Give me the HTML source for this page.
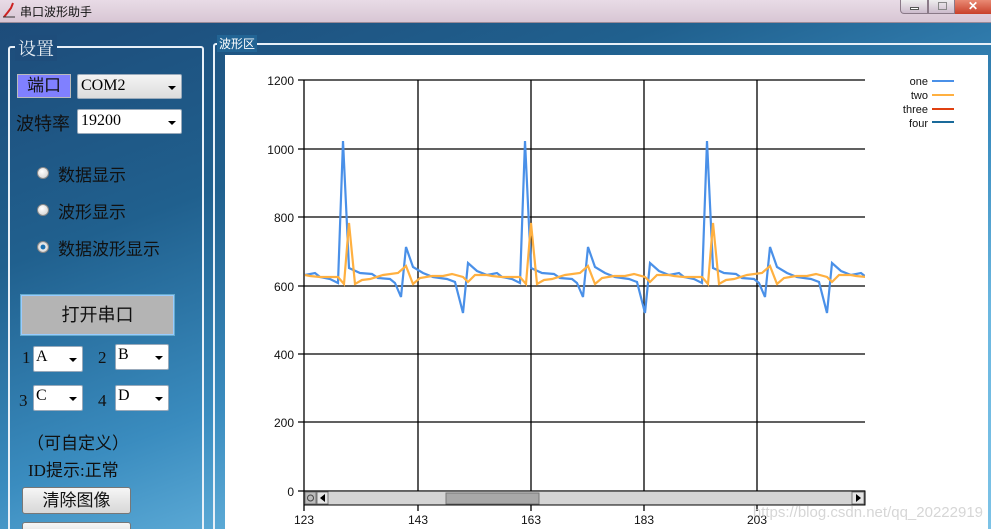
<!DOCTYPE html>
<html><head><meta charset="utf-8">
<style>
*{margin:0;padding:0;box-sizing:border-box}
html{width:991px;height:529px;overflow:hidden}
body{width:991px;height:529px;overflow:hidden;position:relative;font-family:"Liberation Sans","Noto Sans CJK SC",sans-serif;background:linear-gradient(160deg,#1d4a78 0%,#20608e 30%,#3a8cbf 55%,#6bb7e0 75%,#7cc2e6 100%)}
.tb{position:absolute;left:0;top:0;width:991px;height:23px;background:linear-gradient(#e8dbe6,#d8c6d4);border-bottom:1px solid #9a8a98}
.abs{position:absolute}
.cjk{font-family:"Liberation Serif","Noto Serif CJK SC","Noto Sans CJK SC",serif}
.sel{position:absolute;background:#fff;border:1px solid #9ab;border-radius:2px;font-family:"Liberation Serif","Noto Serif CJK SC",serif;color:#000}
.sel:after{content:"";position:absolute;right:5px;top:50%;margin-top:-1px;border-left:4px solid transparent;border-right:4px solid transparent;border-top:4px solid #000}
.lbl{position:absolute;color:#111;font-size:17px}
.radio{position:absolute;width:12px;height:12px;border-radius:50%;background:radial-gradient(circle at 40% 35%,#fff,#ccc);border:1px solid #888}
.btn{position:absolute;border:1px solid #777;border-radius:3px;background:linear-gradient(#f6f6f6,#e6e6e6 50%,#d8d8d8);font-size:17px;text-align:center;color:#111}
</style></head><body>
<div class="tb">
 <svg class="abs" style="left:2px;top:2px" width="14" height="16"><path d="M2 15 L6 10 L9 6 L11 1" stroke="#c22" stroke-width="2" fill="none"/><path d="M1 15 H13" stroke="#333"/></svg>
 <div class="abs" style="left:20px;top:3px;font-size:12px;color:#111">串口波形助手</div>
 <div class="abs" style="left:900px;top:0;width:28px;height:14px;border:1px solid #8a7a88;border-top:none;border-radius:0 0 0 4px;background:linear-gradient(#eee,#cbc)"><div style="position:absolute;left:9px;top:7px;width:9px;height:3px;border:1px solid #555;background:#fff"></div></div>
 <div class="abs" style="left:928px;top:0;width:27px;height:14px;border:1px solid #8a7a88;border-top:none;background:linear-gradient(#eee,#cbc)"><div style="position:absolute;left:9px;top:2px;width:9px;height:8px;border:1px solid #888"></div></div>
 <div class="abs" style="left:955px;top:0;width:36px;height:14px;background:linear-gradient(#e98a74,#c8402a);color:#fff;font-weight:bold;font-size:12px;text-align:center;line-height:12px">✕</div>
</div>
<div class="abs" style="left:8px;top:46px;width:196px;height:500px;border:2px solid #e8f0f8;border-radius:3px"></div>
<div class="abs cjk" style="left:15px;top:35px;padding:0 3px;font-size:18px;color:#e8eef4;background:#1e4d7b">设置</div>
<div class="abs" style="left:17px;top:74px;width:54px;height:24px;background:#8080ff;border:1px solid #bbb;font-size:17px;text-align:center;line-height:22px;color:#111" >端口</div>
<div class="sel" style="left:77px;top:74px;width:105px;height:25px;background:linear-gradient(#f4f4f4,#ddd);font-size:16px;padding:2px 3px">COM2</div>
<div class="lbl" style="left:16px;top:110px;font-size:18px">波特率</div>
<div class="sel" style="left:77px;top:109px;width:105px;height:25px;font-size:16px;padding:2px 3px">19200</div>
<div class="radio" style="left:37px;top:167px"></div><div class="lbl" style="left:58px;top:161px">数据显示</div>
<div class="radio" style="left:37px;top:204px"></div><div class="lbl" style="left:58px;top:198px">波形显示</div>
<div class="radio" style="left:37px;top:241px;background:radial-gradient(circle,#1a6fb0 30%,#eee 40%,#bbb)"></div><div class="lbl" style="left:58px;top:235px">数据波形显示</div>
<div class="abs" style="left:20px;top:294px;width:155px;height:42px;background:#b4b4b4;border:1px solid #6ac;box-shadow:0 0 0 1px #9cf inset;font-size:18px;text-align:center;line-height:40px;color:#111">打开串口</div>
<div class="lbl cjk" style="left:22px;top:348px">1</div><div class="sel" style="left:33px;top:346px;width:50px;height:26px;font-size:16px;padding:1px 2px">A</div>
<div class="lbl cjk" style="left:98px;top:348px">2</div><div class="sel" style="left:115px;top:344px;width:54px;height:26px;font-size:16px;padding:1px 2px">B</div>
<div class="lbl cjk" style="left:19px;top:391px">3</div><div class="sel" style="left:33px;top:385px;width:50px;height:26px;font-size:16px;padding:1px 2px">C</div>
<div class="lbl cjk" style="left:98px;top:391px">4</div><div class="sel" style="left:115px;top:385px;width:54px;height:26px;font-size:16px;padding:1px 2px">D</div>
<div class="lbl" style="left:27px;top:429px">（可自定义）</div>
<div class="lbl" style="left:28px;top:456px"><span class="cjk">ID</span>提示<span class="cjk">:</span>正常</div>
<div class="btn" style="left:22px;top:487px;width:109px;height:27px;line-height:25px">清除图像</div>
<div class="btn" style="left:22px;top:522px;width:109px;height:20px;line-height:18px"></div>
<div class="abs" style="left:213px;top:43px;width:790px;height:510px;border:2px solid #e8f0f8;border-radius:3px"></div>
<div class="abs" style="left:217px;top:35px;padding:0 2px;font-size:12px;color:#fff;background:#226494">波形区</div>
<div class="abs" style="left:225px;top:55px;width:763px;height:480px;background:#fff"></div>
<svg class="abs" style="left:0;top:0" width="991" height="529" font-family="Liberation Sans, sans-serif" font-size="12">
 <defs><clipPath id="c"><rect x="304" y="60" width="561" height="431"/></clipPath>
 <g id="per">
 <polyline fill="none" stroke="#4a90e8" stroke-width="2.2" points="305,275 315,273 320,277 330,279 338,283 343,141 349,268 360,273 372,274 378,278 390,279 395,283 401,297 406,247 413,267 423,273 433,277 447,279 455,282 463,313 468,263 477,271 487,275"/>
 <polyline fill="none" stroke="#ffb040" stroke-width="2.2" points="305,275 310,276 320,277 338,277 344,284 349,223 355,284 362,280 370,279 383,275 398,273 406,266 413,284 420,278 432,276 443,276 452,274 463,277 468,282 475,275 487,275"/>
 </g></defs>
 <g stroke="#000" stroke-width="1.3">
  <line x1="298" y1="80" x2="865" y2="80"/><line x1="298" y1="149" x2="865" y2="149"/><line x1="298" y1="217" x2="865" y2="217"/><line x1="298" y1="286" x2="865" y2="286"/><line x1="298" y1="354" x2="865" y2="354"/><line x1="298" y1="422" x2="865" y2="422"/><line x1="298" y1="491" x2="865" y2="491"/>
  <line x1="304" y1="80" x2="304" y2="511"/><line x1="418" y1="80" x2="418" y2="511"/><line x1="531" y1="80" x2="531" y2="511"/><line x1="644" y1="80" x2="644" y2="511"/><line x1="757" y1="80" x2="757" y2="511"/>
 </g>
 <g clip-path="url(#c)">
  <use href="#per"/><use href="#per" transform="translate(182,0)"/><use href="#per" transform="translate(364,0)"/><use href="#per" transform="translate(546,0)"/>
 </g>
 <g text-anchor="end" fill="#111"><text x="294" y="85">1200</text><text x="294" y="154">1000</text><text x="294" y="222">800</text><text x="294" y="291">600</text><text x="294" y="359">400</text><text x="294" y="427">200</text><text x="294" y="496">0</text></g>
 <g text-anchor="middle" fill="#111"><text x="304" y="524">123</text><text x="418" y="524">143</text><text x="531" y="524">163</text><text x="644" y="524">183</text><text x="757" y="524">203</text></g>
 <rect x="304" y="491" width="561" height="14" fill="#d4d4d4" stroke="#000"/>
 <rect x="305" y="492" width="11" height="12" fill="#bbb" stroke="#777"/><circle cx="310.5" cy="498" r="3" fill="none" stroke="#444"/>
 <rect x="317" y="492" width="11" height="12" fill="#e4e4e4" stroke="#777"/><path d="M320 498 L325 494 L325 502Z" fill="#000"/>
 <rect x="446" y="493" width="93" height="11" fill="#a8a8a8" stroke="#777"/>
 <rect x="852" y="492" width="12" height="12" fill="#e4e4e4" stroke="#777"/><path d="M861 498 L856 494 L856 502Z" fill="#000"/>
 <g text-anchor="end" font-size="11" fill="#111"><text x="928" y="85">one</text><text x="928" y="99">two</text><text x="928" y="113">three</text><text x="928" y="127">four</text></g>
 <g stroke-width="2"><line x1="932" y1="81" x2="954" y2="81" stroke="#4a90e8"/><line x1="932" y1="95" x2="954" y2="95" stroke="#ffb040"/><line x1="932" y1="109" x2="954" y2="109" stroke="#e04010"/><line x1="932" y1="122" x2="954" y2="122" stroke="#1a6a9a"/></g>
 <text x="983" y="517" text-anchor="end" font-size="15" fill="#ccc" opacity="0.8">https://blog.csdn.net/qq_20222919</text>
</svg>
</body></html>
